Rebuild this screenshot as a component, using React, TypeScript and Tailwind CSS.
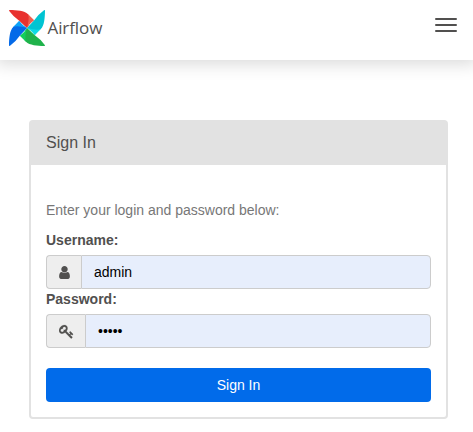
const BLADES = [
  { turn: "rotate(0 12 12)", main: "#e8322f", fold: "#f0604f" },
  { turn: "rotate(90 12 12)", main: "#00c4d2", fold: "#0fdbe6" },
  { turn: "rotate(180 12 12)", main: "#1fb24b", fold: "#12cf5c" },
  { turn: "rotate(270 12 12)", main: "#046ae8", fold: "#0ca2f8" },
];

function Pinwheel() {
  return (
    <svg viewBox="0 0 24 24" className="size-9 shrink-0">
      {BLADES.map((b) => (
        <g key={b.turn} transform={b.turn}>
          <path d="M.43 0C5.15.07 10.31.45 12.72 2.8C15.2 5.3 14.2 9 12 12L6.8 7.18Q3 4.6.15.68A.4.4 0 0 1 .43 0Z" fill={b.main} />
          <path d="M12.72 2.8L16.82 6.8C14.5 8.6 12.6 10.4 12 12C12.8 8.6 13.6 5.4 12.72 2.8Z" fill={b.fold} />
        </g>
      ))}
    </svg>
  );
}

function UserIcon() {
  return (
    <svg viewBox="0 0 1792 1792" className="size-[15px]" fill="currentColor">
      <path d="M1536 1399q0 109-62.5 187t-150.5 78h-854q-88 0-150.5-78t-62.5-187q0-85 8.5-160.5t31.5-152 58.5-131 94-89 134.5-34.5q131 128 313 128t313-128q76 0 134.5 34.5t94 89 58.5 131 31.5 152 8.5 160.5zm-256-887q0 159-112.5 271.5t-271.5 112.5-271.5-112.5-112.5-271.5 112.5-271.5 271.5-112.5 271.5 112.5 112.5 271.5z" />
    </svg>
  );
}

function KeyIcon() {
  return (
    <svg viewBox="0 0 1792 1792" className="size-[15px]" fill="currentColor" stroke="currentColor" strokeWidth="24">
      <path d="M832 512q0-80-56-136t-136-56-136 56-56 136q0 42 19 83-41-19-83-19-80 0-136 56t-56 136 56 136 136 56 136-56 56-136q0-42-19-83 41 19 83 19 80 0 136-56t56-136zm851 704q0 17-49 66t-66 49q-9 0-28.5-16t-36.5-33-38.5-40-24.5-26l-96 96 220 220q28 28 28 68 0 42-39 81t-81 39q-40 0-68-28l-671-671q-176 131-365 131-163 0-265.5-102.5t-102.5-265.5q0-160 95-313t248-248 313-95q163 0 265.5 102.5t102.5 265.5q0 189-131 365l355 355 96-96q-3-3-26-24.5t-40-38.5-33-36.5-16-28.5q0-17 49-66t66-49q13 0 23 10 6 6 46 44.5t82 79.5 86.5 86 73 78 28.5 41z" />
    </svg>
  );
}

export default function App() {
  return (
    <div className="h-[432px] overflow-hidden bg-white font-['Liberation_Sans',Arial,sans-serif] text-sm leading-5 text-[#51504f]">
      <header className="flex h-[60px] justify-between bg-white pt-2.5 pr-4 pl-[9px] shadow-[0_0_16px_4px_rgba(0,0,0,0.15)]">
        <a className="flex h-9 items-center gap-[2.5px]">
          <Pinwheel />
          <span className="font-['Open_Sans',sans-serif] text-[17px] leading-9 tracking-[-0.1px]">Airflow</span>
        </a>
        <button aria-label="Toggle navigation" className="flex h-[30px] w-[22px] flex-col items-center justify-center gap-1">
          <span className="h-0.5 w-[22px] rounded-[1px] bg-[#51504f]" />
          <span className="h-0.5 w-[22px] rounded-[1px] bg-[#51504f]" />
          <span className="h-0.5 w-[22px] rounded-[1px] bg-[#51504f]" />
        </button>
      </header>
      <main className="pt-[60px] pr-[25px] pl-[29px]">
        <section className="h-[299px] rounded border-2 border-[#e2e2e2] bg-white">
          <h1 className="h-[43px] bg-[#e2e2e2] px-[15px] pt-[11px] text-base leading-5">Sign In</h1>
          <form className="px-[15px] pt-[35px]">
            <p className="mb-2.5 text-[#777]">Enter your login and password below:</p>
            <label className="mb-[5px] block font-bold">Username:</label>
            <div className="flex h-[34px]">
              <span className="flex w-[35px] items-center justify-center rounded-l border border-r-0 border-[#ccc] bg-[#eee]"><UserIcon /></span>
              <input readOnly defaultValue="admin" className="min-w-0 flex-1 rounded-r border border-[#ccc] bg-[#e7eefc] px-3 text-black outline-none" />
            </div>
            <label className="mb-[5px] block font-bold">Password:</label>
            <div className="flex h-[34px]">
              <span className="flex w-[39px] items-center justify-center rounded-l border border-r-0 border-[#ccc] bg-[#eee]"><KeyIcon /></span>
              <input readOnly type="password" defaultValue="admin" className="min-w-0 flex-1 rounded-r border border-[#ccc] bg-[#e7eefc] px-3 text-black outline-none" />
            </div>
            <button type="button" className="mt-5 h-[34px] w-full rounded bg-[#016bea] text-white">Sign In</button>
          </form>
        </section>
      </main>
    </div>
  );
}
